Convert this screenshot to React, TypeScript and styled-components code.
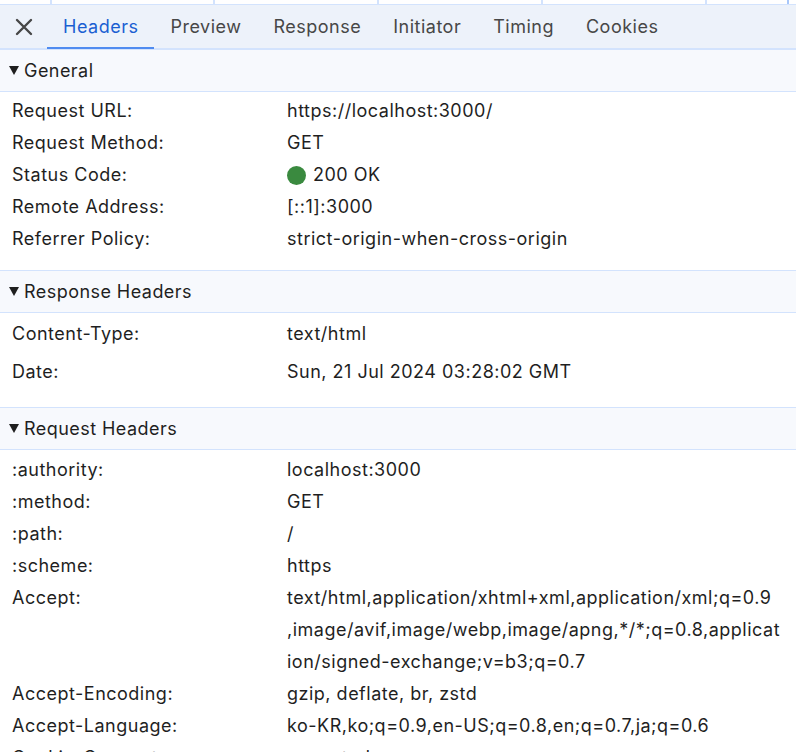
import React from 'react';
import styled, { createGlobalStyle } from 'styled-components';

const GlobalStyle = createGlobalStyle`
  html, body {
    margin: 0;
    padding: 0;
    background: #ffffff;
  }
  body {
    font-family: Inter, "Noto Sans", "Liberation Sans", sans-serif;
    color: #1f1f1f;
    overflow: hidden;
  }
`;

const Page = styled.div`
  width: 796px;
  height: 752px;
  overflow: hidden;
`;

const TopStrip = styled.div`
  height: 4px;
  display: grid;
  grid-template-columns: 52px 163px 164px 164px 164px 82px 1fr;
  border-bottom: 1px solid #d3e3fd;
`;

const StripCell = styled.div<{ $accent?: boolean }>`
  background: #ffffff;
  border-right: 2px solid ${(p) => (p.$accent ? '#a8c7fa' : '#d3e3fd')};
`;

const TabBar = styled.div`
  height: 43px;
  display: flex;
  align-items: stretch;
  background: #edf2fa;
  border-bottom: 2px solid #d3e3fd;
`;

const CloseButton = styled.div`
  width: 47px;
  display: flex;
  align-items: center;
  justify-content: center;
  color: #474747;
`;

const Tab = styled.div<{ $active?: boolean }>`
  position: relative;
  display: flex;
  align-items: center;
  padding: 0 16px;
  font-size: 18px;
  letter-spacing: 0.5px;
  color: ${(p) => (p.$active ? '#1b5fd2' : '#474747')};

  &::after {
    content: '';
    position: absolute;
    left: 0;
    right: 0;
    bottom: -1px;
    height: 2px;
    background: ${(p) => (p.$active ? '#4f8bf0' : 'transparent')};
  }
`;

const SectionHeader = styled.div`
  height: 41px;
  display: flex;
  align-items: center;
  gap: 5px;
  padding-left: 9px;
  background: #f7f9fd;
  border-bottom: 1px solid #d3e3fd;
  font-size: 18px;
  letter-spacing: 0.45px;
  color: #1f1f1f;
`;

const Triangle = styled.span`
  width: 0;
  height: 0;
  border-left: 5px solid transparent;
  border-right: 5px solid transparent;
  border-top: 9px solid #1f1f1f;
`;

const SectionBody = styled.div<{ $gap: number; $top: number; $bottom: number }>`
  display: flex;
  flex-direction: column;
  gap: ${(p) => p.$gap}px;
  padding: ${(p) => p.$top}px 0 ${(p) => p.$bottom}px;
  border-bottom: 1px solid #d3e3fd;
`;

const Row = styled.div`
  display: grid;
  grid-template-columns: 275px 1fr;
  padding-left: 12px;
  font-size: 18px;
  line-height: 32px;
  letter-spacing: 0.5px;
  color: #1f1f1f;
`;

const Label = styled.div`
  white-space: nowrap;
`;

const Value = styled.div`
  display: flex;
  align-items: center;
  white-space: nowrap;
`;

const Lines = styled.div`
  display: flex;
  flex-direction: column;
  white-space: nowrap;
`;

const StatusDot = styled.span`
  width: 19px;
  height: 19px;
  border-radius: 50%;
  background: #3a8a3f;
  margin-right: 7px;
`;

const tabs = ['Headers', 'Preview', 'Response', 'Initiator', 'Timing', 'Cookies'];

type Entry = [string, string | string[]];

const general: Entry[] = [
  ['Request URL:', 'https://localhost:3000/'],
  ['Request Method:', 'GET'],
  ['Status Code:', '200 OK'],
  ['Remote Address:', '[::1]:3000'],
  ['Referrer Policy:', 'strict-origin-when-cross-origin'],
];

const response: Entry[] = [
  ['Content-Type:', 'text/html'],
  ['Date:', 'Sun, 21 Jul 2024 03:28:02 GMT'],
];

const request: Entry[] = [
  [':authority:', 'localhost:3000'],
  [':method:', 'GET'],
  [':path:', '/'],
  [':scheme:', 'https'],
  [
    'Accept:',
    [
      'text/html,application/xhtml+xml,application/xml;q=0.9',
      ',image/avif,image/webp,image/apng,*/*;q=0.8,applicat',
      'ion/signed-exchange;v=b3;q=0.7',
    ],
  ],
  ['Accept-Encoding:', 'gzip, deflate, br, zstd'],
  ['Accept-Language:', 'ko-KR,ko;q=0.9,en-US;q=0.8,en;q=0.7,ja;q=0.6'],
  ['Cookie-Consent:', 'accepted'],
];

const CloseIcon = () => (
  <svg width="18" height="18" viewBox="0 0 18 18">
    <path d="M2 2L16 16M16 2L2 16" stroke="currentColor" strokeWidth="2.4" strokeLinecap="round" />
  </svg>
);

const Section: React.FC<{
  title: string;
  rows: Entry[];
  gap?: number;
  top: number;
  bottom: number;
}> = ({ title, rows, gap = 0, top, bottom }) => (
  <>
    <SectionHeader>
      <Triangle />
      {title}
    </SectionHeader>
    <SectionBody $gap={gap} $top={top} $bottom={bottom}>
      {rows.map(([label, value]) => (
        <Row key={label}>
          <Label>{label}</Label>
          {Array.isArray(value) ? (
            <Lines>
              {value.map((line) => (
                <span key={line}>{line}</span>
              ))}
            </Lines>
          ) : (
            <Value>
              {label === 'Status Code:' && <StatusDot />}
              {value}
            </Value>
          )}
        </Row>
      ))}
    </SectionBody>
  </>
);

export default function App() {
  return (
    <Page>
      <GlobalStyle />
      <TopStrip>
        <StripCell />
        <StripCell />
        <StripCell />
        <StripCell />
        <StripCell />
        <StripCell $accent />
      </TopStrip>
      <TabBar>
        <CloseButton>
          <CloseIcon />
        </CloseButton>
        {tabs.map((t, i) => (
          <Tab key={t} $active={i === 0}>
            {t}
          </Tab>
        ))}
      </TabBar>
      <Section title="General" rows={general} top={3} bottom={15} />
      <Section title="Response Headers" rows={response} gap={6} top={5} bottom={19} />
      <Section title="Request Headers" rows={request} top={4} bottom={10} />
    </Page>
  );
}
